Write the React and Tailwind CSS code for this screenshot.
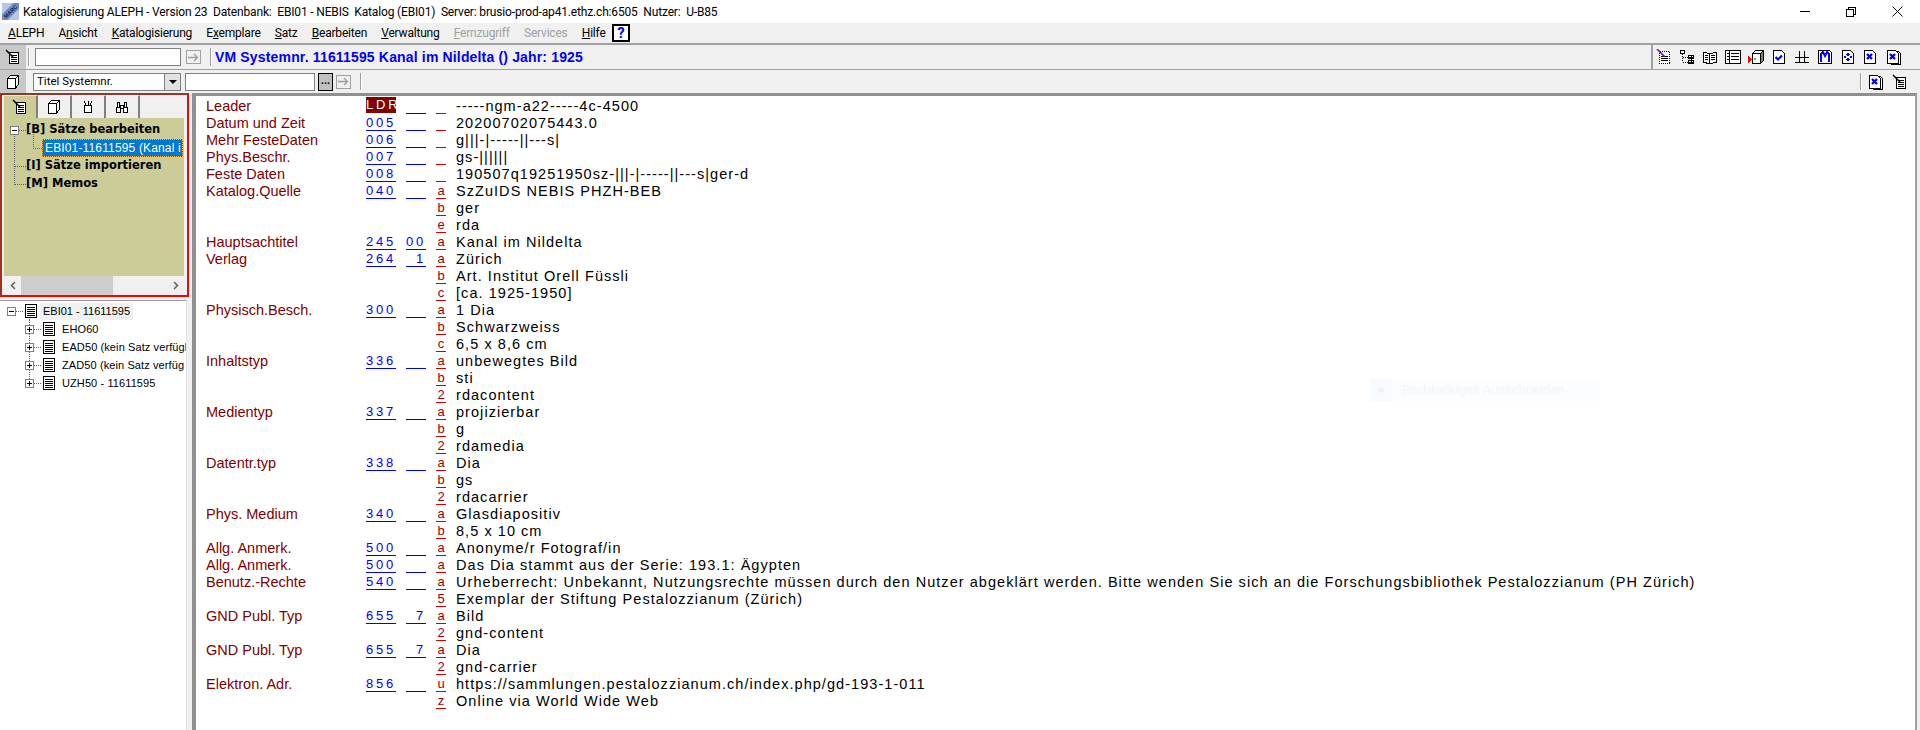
import React from 'react';

const ui = { fontFamily: 'Roboto, sans-serif' };
const arial = { fontFamily: '"Liberation Sans", Arial, sans-serif' };
const verdana = { fontFamily: '"DejaVu Sans", Verdana, sans-serif' };

const RECORDS = [
  ['Leader', 'LDR', '', '', '-----ngm-a22-----4c-4500'],
  ['Datum und Zeit', '005', '', '', '20200702075443.0'],
  ['Mehr FesteDaten', '006', '', '', 'g|||-|-----||---s|'],
  ['Phys.Beschr.', '007', '', '', 'gs-||||||'],
  ['Feste Daten', '008', '', '', '190507q19251950sz-|||-|-----||---s|ger-d'],
  ['Katalog.Quelle', '040', '', 'a', 'SzZuIDS NEBIS PHZH-BEB'],
  ['', '', '', 'b', 'ger'],
  ['', '', '', 'e', 'rda'],
  ['Hauptsachtitel', '245', '00', 'a', 'Kanal im Nildelta'],
  ['Verlag', '264', '1', 'a', 'Zürich'],
  ['', '', '', 'b', 'Art. Institut Orell Füssli'],
  ['', '', '', 'c', '[ca. 1925-1950]'],
  ['Physisch.Besch.', '300', '', 'a', '1 Dia'],
  ['', '', '', 'b', 'Schwarzweiss'],
  ['', '', '', 'c', '6,5 x 8,6 cm'],
  ['Inhaltstyp', '336', '', 'a', 'unbewegtes Bild'],
  ['', '', '', 'b', 'sti'],
  ['', '', '', '2', 'rdacontent'],
  ['Medientyp', '337', '', 'a', 'projizierbar'],
  ['', '', '', 'b', 'g'],
  ['', '', '', '2', 'rdamedia'],
  ['Datentr.typ', '338', '', 'a', 'Dia'],
  ['', '', '', 'b', 'gs'],
  ['', '', '', '2', 'rdacarrier'],
  ['Phys. Medium', '340', '', 'a', 'Glasdiapositiv'],
  ['', '', '', 'b', '8,5 x 10 cm'],
  ['Allg. Anmerk.', '500', '', 'a', 'Anonyme/r Fotograf/in'],
  ['Allg. Anmerk.', '500', '', 'a', 'Das Dia stammt aus der Serie: 193.1: Ägypten'],
  ['Benutz.-Rechte', '540', '', 'a', 'Urheberrecht: Unbekannt, Nutzungsrechte müssen durch den Nutzer abgeklärt werden. Bitte wenden Sie sich an die Forschungsbibliothek Pestalozzianum (PH Zürich)'],
  ['', '', '', '5', 'Exemplar der Stiftung Pestalozzianum (Zürich)'],
  ['GND Publ. Typ', '655', '7', 'a', 'Bild'],
  ['', '', '', '2', 'gnd-content'],
  ['GND Publ. Typ', '655', '7', 'a', 'Dia'],
  ['', '', '', '2', 'gnd-carrier'],
  ['Elektron. Adr.', '856', '', 'u', 'https://sammlungen.pestalozzianum.ch/index.php/gd-193-1-011'],
  ['', '', '', 'z', 'Online via World Wide Web'],
];

const Svg = ({ children, size = 16, className = '' }) => (
  <svg width={size} height={size} viewBox={`0 0 ${size} ${size}`} fill="none" stroke="#000" strokeWidth="1" shapeRendering="crispEdges" className={`shrink-0 ${className}`}>
    {children}
  </svg>
);

const EditIcon = () => (
  <Svg>
    <path d="M4.5 3.5h9v11h-9z" fill="#fff" />
    <path d="M6 6.5h6M6 8.5h6M6 10.5h6M6 12.5h6" />
    <path d="M1 1l7 7" strokeWidth="1.5" shapeRendering="auto" />
  </Svg>
);

const BookIcon = () => (
  <Svg>
    <path d="M2.5 4.5l3-3h8v9l-3 3.5h-8z" fill="#fff" />
    <path d="M2.5 4.5h8v9.5M10.5 4.5l3-3" />
  </Svg>
);

const BlueDoc = ({ stacked }) => (
  <Svg>
    {stacked && <path d="M6.5 2.5h6l2 2v11h-9z" fill="#fff" />}
    <path d="M1.5 1.5h8l3 3v10h-11z" fill="#fff" />
    <path d="M4 5l5 5M9 5l-5 5" stroke="#0000ff" strokeWidth="2.4" shapeRendering="auto" />
  </Svg>
);

const ListDoc = () => (
  <svg width="12" height="14" viewBox="0 0 12 14" fill="none" stroke="#000" shapeRendering="crispEdges" className="shrink-0">
    <path d="M.5.5h11v13H.5z" fill="#fff" />
    <path d="M2 3.5h8M2 5.5h8M2 7.5h8M2 9.5h8M2 11.5h8" />
  </svg>
);

const GoButton = () => (
  <span className="w-[15px] h-[14px] border border-[#a0a0a0] bg-[#f0f0f0] flex items-center justify-center shrink-0">
    <svg width="11" height="9" viewBox="0 0 11 9" fill="none" stroke="#a0a0a0" strokeWidth="1.4">
      <path d="M0 4.5h9M6 1l3.5 3.5L6 8" />
    </svg>
  </span>
);

const Sep = () => <span className="w-[2px] self-stretch my-[3px] border-l border-r border-l-[#a0a0a0] border-r-white shrink-0" />;

const ToolbarIcons = () => (
  <div className="flex items-center gap-[7px] pr-[18px]">
    <Svg>
      <path d="M3.5 2.5h10v12h-10z" fill="#fff" strokeDasharray="1 1" />
      <path d="M5 7.5h7M5 9.5h7M5 11.5h7" />
      <path d="M1 0l8 8" stroke="#6a0dad" strokeWidth="1.6" shapeRendering="auto" />
    </Svg>
    <Svg>
      <path d="M1.5 1.5h4v3h-4zM9.5 6.5h5v3h-5zM9.5 11.5h5v3h-5z" fill="#fff" />
      <path d="M3.5 5v8h6M3.5 8h6" strokeDasharray="1 1" />
      <path d="M12 6v9M9.5 8h5M9.5 13h5" />
    </Svg>
    <Svg>
      <path d="M1.5 3.5l6 1v10l-6-1zM14.5 3.5l-7 1v10l7-1z" fill="#fff" />
      <path d="M3 6.5h3M3 8.5h3M3 10.5h3M9 6.5h4M9 8.5h4M9 10.5h4" />
    </Svg>
    <Svg>
      <path d="M.5 1.5h15v13H.5z" fill="#fff" />
      <path d="M4.5 1.5v13M6 4.5h8M6 7.5h8M6 10.5h8M1.5 4.5h2M1.5 7.5h2M1.5 10.5h2" />
    </Svg>
    <Svg>
      <path d="M4.5 4.5l3-3h8v10l-3 3h-8z" fill="#fff" />
      <path d="M12.5 4.5v10l3-3v-10z" fill="#808080" />
      <path d="M4.5 4.5h8" />
      <path d="M0 7l4 3.5L0 14z" fill="#ff0000" stroke="none" />
      <path d="M6 10h2" stroke="#22dd22" strokeWidth="2" />
    </Svg>
    <Svg>
      <path d="M2.5 1.5h8l3 3v10h-11z" fill="#fff" />
      <path d="M4.5 8l2.5 2.5L11 6.5" stroke="#0000ff" strokeWidth="2.2" shapeRendering="auto" />
    </Svg>
    <Svg>
      <path d="M1 13.5h14M1 8.5h14M5.5 2v12M10.5 2v12" />
      <path d="M5.5 8.5h5v5h-5z" fill="#f0f0f0" />
    </Svg>
    <Svg>
      <path d="M1.5 1.5h11l2 2v11h-13z" fill="#fff" />
      <path d="M4 13V5l2-2 2 4 2-4 2 2v8" stroke="#0000ff" strokeWidth="2" shapeRendering="auto" />
    </Svg>
    <Svg>
      <path d="M2.5 1.5h8l3 3v10h-11z" fill="#fff" />
      <path d="M8 3.5l2 2-2 2-2-2zM8 8.5l2 2-2 2-2-2zM5 6.5l1.5 1.5L5 9.5 3.5 8zM11 6.5l1.5 1.5L11 9.5 9.5 8z" fill="#0000ff" stroke="none" />
    </Svg>
    <BlueDoc />
    <BlueDoc stacked />
  </div>
);

const TreeMinus = () => (
  <span className="w-[9px] h-[9px] border border-[#808080] bg-white flex items-center justify-center shrink-0">
    <span className="w-[5px] h-px bg-black" />
  </span>
);

const TreePlus = () => (
  <span className="relative w-[9px] h-[9px] border border-[#808080] bg-white flex items-center justify-center shrink-0">
    <span className="w-[5px] h-px bg-black" />
    <span className="absolute left-[3px] top-[1px] w-px h-[5px] bg-black" />
  </span>
);

const Dots = ({ w = 'w-[7px]' }) => <span className={`${w} border-t border-dotted border-[#606060] shrink-0`} />;

const Node = ({ children }) => (
  <div className="flex items-center h-[18px] pl-[10px]">
    <Dots w="w-[12px]" />
    <span className="font-bold text-black text-[11.5px]">{children}</span>
  </div>
);

const LibRow = ({ label }) => (
  <div className="flex items-center h-[18px] pl-[25px]">
    <TreePlus />
    <Dots w="w-[7px]" />
    <span className="ml-[2px]"><ListDoc /></span>
    <span className="ml-[7px] whitespace-nowrap tracking-[0.1px]">{label}</span>
  </div>
);

const Tab = ({ active, children }) => (
  <span className={`w-[34px] h-[23px] flex items-center justify-center border-r-2 border-r-[#808080] border-t border-t-white ${active ? 'bg-[#cccc99]' : 'bg-[#f0f0f0]'}`}>
    {children}
  </span>
);

const Record = ({ row }) => {
  const [label, tag, ind, sub, value] = row;
  const isLeader = tag === 'LDR';
  return (
    <div className="flex h-[17px] leading-[18px] text-[14.5px] whitespace-nowrap">
      <span className="w-[160px] text-[#800000] shrink-0">{label}</span>
      <span className={`w-[30px] shrink-0 text-[13px] tracking-[2.8px] ${isLeader ? 'bg-[#800000] text-white h-[16px] leading-[16px]' : 'text-[#0000ff]'} ${tag && !isLeader ? 'border-b border-[#0000ff]' : ''}`}>{tag}</span>
      <span className={`w-[20px] ml-[10px] shrink-0 text-right text-[13px] tracking-[2.8px] text-[#0000ff] ${tag ? 'border-b border-[#0000ff]' : ''}`}>{ind}</span>
      <span className="w-[10px] ml-[10px] shrink-0 text-center text-[13px] text-[#a00000] border-b border-[#cc0000]">{sub}</span>
      <span className="ml-[10px] text-black tracking-[1.05px]">{value}</span>
    </div>
  );
};

export default function App() {
  return (
    <div className="w-[1920px] h-[730px] overflow-hidden flex flex-col bg-[#f0f0f0] relative" style={ui}>
      {/* Title bar */}
      <div className="h-[23px] bg-white flex items-center pl-[2px] text-[12px] text-black shrink-0">
        <svg width="17" height="17" viewBox="0 0 17 17" className="shrink-0">
          <rect width="17" height="17" fill="#b8c8e4" />
          <path d="M0 17L17 0" stroke="#6f8cc0" strokeWidth="8" />
          <text x="8.5" y="10.5" textAnchor="middle" fontSize="5.5" fontWeight="700" fill="#10204a" transform="rotate(-45 8.5 8.5)" style={arial}>MARC</text>
        </svg>
        <span className="ml-[4px] whitespace-pre tracking-[-0.16px]">Katalogisierung ALEPH - Version 23  Datenbank:  EBI01 - NEBIS  Katalog (EBI01)  Server: brusio-prod-ap41.ethz.ch:6505  Nutzer:  U-B85</span>
        <div className="ml-auto flex items-center h-full">
          <span className="w-[46px] flex justify-center"><span className="w-[10px] h-px bg-black" /></span>
          <span className="w-[46px] flex justify-center">
            <svg width="10" height="10" viewBox="0 0 10 10" fill="none" stroke="#000" shapeRendering="crispEdges"><path d="M.5 2.5h7v7h-7zM2.5 2.5v-2h7v7h-2" /></svg>
          </span>
          <span className="w-[46px] flex justify-center">
            <svg width="11" height="11" viewBox="0 0 11 11" fill="none" stroke="#000"><path d="M.5.5l10 10M10.5.5l-10 10" /></svg>
          </span>
        </div>
      </div>

      {/* Menu bar */}
      <div className="h-[20px] flex items-center pl-[8px] text-[12px] tracking-[-0.2px] text-black shrink-0 gap-[14.2px]">
        <span><u>A</u>LEPH</span>
        <span>A<u>n</u>sicht</span>
        <span><u>K</u>atalogisierung</span>
        <span>E<u>x</u>emplare</span>
        <span><u>S</u>atz</span>
        <span><u>B</u>earbeiten</span>
        <span><u>V</u>erwaltung</span>
        <span className="text-[#a0a0a0]"><u>F</u>ernzugriff</span>
        <span className="text-[#a0a0a0]">Services</span>
        <span><u>H</u>ilfe</span>
        <span className="w-[18px] h-[18px] -ml-[8px] border-2 border-black bg-white text-[#0000ff] font-bold text-[15px] leading-[14px] text-center">?</span>
      </div>

      {/* Toolbar 1 */}
      <div className="h-[26px] flex items-center border-t-2 border-[#a0a0a0] shrink-0">
        <span className="w-[26px] h-full flex items-center pl-[5px] bg-[#c8c8c8] shrink-0"><EditIcon /></span>
        <span className="ml-[2px] h-full flex"><Sep /></span>
        <span className="w-[146px] h-[18px] ml-[5px] bg-white border border-[#808080] shrink-0" />
        <span className="ml-[5px]"><GoButton /></span>
        <span className="ml-[9px] h-full flex"><Sep /></span>
        <span className="ml-[3px] text-[#0000ff] font-bold text-[14px] tracking-[0.16px]" style={arial}>VM Systemnr. 11611595 Kanal im Nildelta () Jahr: 1925</span>
        <div className="ml-auto h-full flex items-center border-l-2 border-[#a0a0a0]">
          <span className="w-[3px]" />
          <ToolbarIcons />
        </div>
      </div>

      {/* Toolbar 2 */}
      <div className="h-[24px] flex items-center border-t border-[#a0a0a0] shrink-0">
        <span className="w-[26px] h-full flex items-center pl-[5px] bg-[#c8c8c8] shrink-0"><BookIcon /></span>
        <span className="w-[132px] h-[18px] ml-[7px] bg-white border border-[#808080] flex items-center pl-[3px] text-[11.5px] text-black shrink-0">Titel Systemnr.</span>
        <span className="w-[17px] h-[18px] -ml-px border border-[#808080] bg-[#e1e1e1] flex items-center justify-center shrink-0">
          <span className="border-x-[4px] border-x-transparent border-t-[4px] border-t-black" />
        </span>
        <span className="w-[130px] h-[18px] ml-[4px] bg-white border border-[#808080] shrink-0" />
        <span className="w-[15px] h-[18px] ml-[3px] border border-black bg-[#c0c0c0] text-[11px] font-bold leading-[14px] text-center shrink-0">...</span>
        <span className="ml-[3px]"><GoButton /></span>
        <span className="ml-[9px] h-full flex"><Sep /></span>
        <div className="ml-auto h-full flex items-center gap-[6px] pr-[12px]">
          <Sep />
          <BlueDoc stacked />
          <span className="ml-[2px]"><EditIcon /></span>
        </div>
      </div>

      {/* Body */}
      <div className="flex-1 flex min-h-0">
        {/* Left column */}
        <div className="w-[189px] shrink-0 flex flex-col">
          <div className="h-[204px] border-2 border-[#ff0000] border-t-[#a03020] border-l-[#a03020] pl-[2px] pr-[3px] flex flex-col" style={verdana}>
            <div className="flex h-[23px] shrink-0">
              <Tab active><EditIcon /></Tab>
              <Tab><BookIcon /></Tab>
              <Tab>
                <Svg size={14}><path d="M3.5 5.5h7v7h-7z" fill="#fff" /><path d="M3 1l2 4M11 1L9 5M7 1v4" /></Svg>
              </Tab>
              <Tab>
                <Svg><path d="M2.5 8.5h4v5h-4zM9.5 8.5h4v5h-4zM3.5 3.5h2v5h-2zM10.5 3.5h2v5h-2zM6.5 6.5h3v3h-3z" fill="#fff" /></Svg>
              </Tab>
            </div>
            <div className="relative flex-1 bg-[#cccc99] min-h-0 pt-[3px] overflow-hidden">
              <span className="absolute left-[10px] top-[16px] h-[51px] border-l border-dotted border-[#606060]" />
              <span className="absolute left-[29px] top-[16px] h-[15px] border-l border-dotted border-[#606060]" />
              <div className="flex items-center h-[18px] pl-[6px]">
                <TreeMinus />
                <Dots w="w-[7px]" />
                <span className="font-bold text-black text-[11.5px]">[B] Sätze bearbeiten</span>
              </div>
              <div className="flex items-center h-[18px] pl-[29px]">
                <Dots w="w-[9px]" />
                <span className="w-[141px] h-[18px] bg-[#0078d7] text-white text-[12px] leading-[16px] pl-[2px] tracking-[0.15px] whitespace-nowrap overflow-hidden border border-dotted border-[#ffb030]" style={arial}>EBI01-11611595 (Kanal i</span>
              </div>
              <Node>[I] Sätze importieren</Node>
              <Node>[M] Memos</Node>
            </div>
            <div className="h-[19px] flex items-center bg-[#f0f0f0] shrink-0">
              <span className="w-[17px] flex justify-center">
                <svg width="6" height="9" viewBox="0 0 6 9" fill="none" stroke="#606060" strokeWidth="1.5"><path d="M5 1L1.5 4.5 5 8" /></svg>
              </span>
              <span className="w-[92px] h-full bg-[#cdcdcd]" />
              <span className="ml-auto w-[17px] flex justify-center">
                <svg width="6" height="9" viewBox="0 0 6 9" fill="none" stroke="#606060" strokeWidth="1.5"><path d="M1 1l3.5 3.5L1 8" /></svg>
              </span>
            </div>
          </div>
          <div className="relative flex-1 mt-[3px] w-[187px] bg-white border-t border-r border-t-[#a0a0a0] border-r-[#e4e4e4] pt-px text-[11px] text-black overflow-hidden" style={arial}>
            <span className="absolute left-[29px] top-[18px] h-[62px] border-l border-dotted border-[#606060]" />
            <div className="flex items-center h-[18px] pl-[7px]">
              <TreeMinus />
              <Dots w="w-[7px]" />
              <span className="ml-[2px]"><ListDoc /></span>
              <span className="ml-[3px] px-[3px] h-[17px] leading-[17px] bg-[#f0f0f0]">EBI01 - 11611595</span>
            </div>
            <LibRow label="EHO60" />
            <LibRow label="EAD50 (kein Satz verfügl" />
            <LibRow label="ZAD50 (kein Satz verfüg" />
            <LibRow label="UZH50 - 11611595" />
          </div>
        </div>

        {/* Record view */}
        <div className="flex-1 ml-[3px] mr-[3px] bg-white border-l-4 border-t-[3px] border-r-2 border-l-[#909090] border-t-[#909090] border-r-[#a0a0a0] pl-[10px] pt-[1px] overflow-hidden" style={arial}>
          {RECORDS.map((row, i) => <Record key={i} row={row} />)}
        </div>
      </div>

      {/* faint leftover context menu item */}
      <div className="absolute left-[1370px] top-[379px] w-[230px] h-[22px] bg-[#fcfdfe] flex items-center text-[13px] text-[#f5f6f8]" style={ui}>
        <span className="w-[22px] h-full bg-[#f7fbff] flex items-center justify-center shrink-0">
          <span className="w-[6px] h-[6px] rounded-full bg-[#f0f2f5]" />
        </span>
        <span className="ml-[10px]"><u>R</u>echteckiges Ausschneiden</span>
      </div>
    </div>
  );
}
